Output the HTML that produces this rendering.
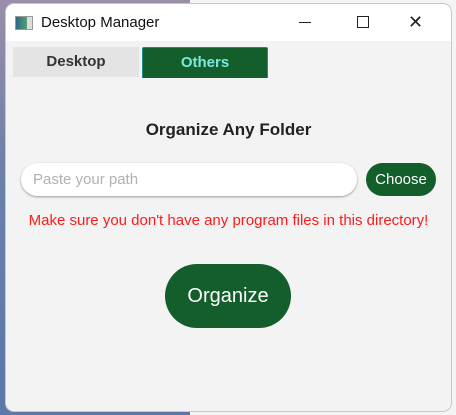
<!DOCTYPE html>
<html><head><style>
body{margin:0;width:456px;height:415px;overflow:hidden;background:linear-gradient(180deg,#9a8fa8 0%,#6d80a8 40%,#5a78a8 100%);font-family:"Liberation Sans",sans-serif;position:relative}
.rbg{position:absolute;left:190px;top:0;width:266px;height:415px;background:#f4f4f4}
.win{position:absolute;left:6px;top:4px;width:445px;height:407px;background:#f3f3f3;border-radius:8px;overflow:hidden;box-shadow:0 0 0 1px #c8c8c8}
.tb{height:37px;background:#fff;position:relative}
.t{position:absolute;left:35px;top:10px;font-size:15px;color:#111}
.ic{position:absolute;left:9px;top:12px;width:16px;height:12px;border:1px solid #999;background:linear-gradient(90deg,#2a6a8a,#58a070 70%,#ddd 70%)}
.tab{position:absolute;top:43px;height:30px;line-height:30px;text-align:center;font-weight:bold;font-size:15px}
.abs{position:absolute}
</style></head><body>
<div class="rbg"></div>
<div class="win">
<div class="tb"><div class="ic"></div><div class="t">Desktop Manager</div>
<div class="abs" style="left:293px;top:18px;width:12px;height:1px;background:#222"></div>
<div class="abs" style="left:351px;top:12px;width:10px;height:10px;border:1px solid #222"></div>
<div class="abs" style="left:402px;top:8px;font-size:18px;color:#222">✕</div>
</div>
<div class="tab" style="left:7px;width:126px;background:#e4e4e4;color:#333">Desktop</div>
<div class="tab" style="left:136px;width:124px;background:#135e2a;color:#7ee8df;border:1px solid #1a8a8a;border-bottom:none;border-radius:2px 2px 0 0">Others</div>
<div class="abs" style="left:0;width:445px;top:116px;text-align:center;font-weight:bold;font-size:17px;color:#222">Organize Any Folder</div>
<div class="abs" style="left:15px;top:159px;width:336px;height:33px;background:#fff;border-radius:17px;box-shadow:0 1px 2px #999"></div>
<div class="abs" style="left:27px;top:167px;font-size:15px;color:#b0b0b0">Paste your path</div>
<div class="abs" style="left:360px;top:159px;width:70px;height:33px;background:#135e2a;border-radius:17px;color:#fff;font-size:15px;line-height:33px;text-align:center">Choose</div>
<div class="abs" style="left:0;width:445px;top:208px;text-align:center;font-size:15px;color:#ff1a1a">Make sure you don't have any program files in this directory!</div>
<div class="abs" style="left:159px;top:260px;width:126px;height:64px;background:#135e2a;border-radius:32px;color:#fff;font-size:20px;line-height:64px;text-align:center">Organize</div>
</div>
</body></html>
